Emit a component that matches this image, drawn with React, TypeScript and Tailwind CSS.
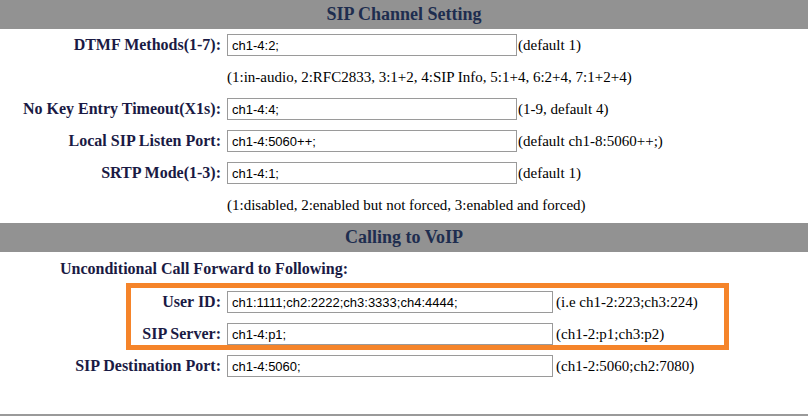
import React from 'react';

const serif = { fontFamily: '"Liberation Serif", "Times New Roman", serif' };

interface RowProps {
  label: string;
  value: string;
  hint: string;
  wide?: boolean;
}

const SectionHeader: React.FC<{ title: string; className?: string }> = ({ title, className }) => (
  <div
    className={`flex items-center justify-center bg-[#929292] text-[18px] font-bold text-[#1e2d4f] ${className ?? ''}`}
    style={serif}
  >
    {title}
  </div>
);

const FieldRow: React.FC<RowProps> = ({ label, value, hint, wide }) => (
  <div className="flex h-[32px] items-center">
    <div className="w-[221px] shrink-0 text-right text-[16px] font-bold text-[#1a1a44]" style={serif}>
      {label}
    </div>
    <input
      readOnly
      value={value}
      className={`ml-[6px] h-[22px] shrink-0 border border-[#9a9a9a] bg-white px-[4px] text-[13px] text-black outline-none ${
        wide ? 'w-[326px]' : 'w-[290px]'
      }`}
      style={{ fontFamily: '"Liberation Sans", Arial, sans-serif' }}
    />
    <span className={`text-[15px] text-black ${wide ? 'ml-[3px]' : 'ml-[1px]'}`} style={serif}>
      {hint}
    </span>
  </div>
);

const HelpRow: React.FC<{ text: string }> = ({ text }) => (
  <div className="flex h-[32px] items-center pl-[227px] text-[15px] text-black" style={serif}>
    {text}
  </div>
);

export default function App() {
  return (
    <div className="relative h-[416px] w-[808px] overflow-hidden bg-white">
      <SectionHeader title="SIP Channel Setting" className="h-[29px]" />
      <FieldRow label="DTMF Methods(1-7):" value="ch1-4:2;" hint="(default 1)" />
      <HelpRow text="(1:in-audio, 2:RFC2833, 3:1+2, 4:SIP Info, 5:1+4, 6:2+4, 7:1+2+4)" />
      <FieldRow label="No Key Entry Timeout(X1s):" value="ch1-4:4;" hint="(1-9, default 4)" />
      <FieldRow label="Local SIP Listen Port:" value="ch1-4:5060++;" hint="(default ch1-8:5060++;)" />
      <FieldRow label="SRTP Mode(1-3):" value="ch1-4:1;" hint="(default 1)" />
      <HelpRow text="(1:disabled, 2:enabled but not forced, 3:enabled and forced)" />

      <SectionHeader title="Calling to VoIP" className="mt-[2px] h-[29px]" />
      <div
        className="flex h-[34px] items-center pl-[60px] text-[16px] font-bold text-[#1a1a44]"
        style={serif}
      >
        Unconditional Call Forward to Following:
      </div>
      <FieldRow label="User ID:" value="ch1:1111;ch2:2222;ch3:3333;ch4:4444;" hint="(i.e ch1-2:223;ch3:224)" wide />
      <FieldRow label="SIP Server:" value="ch1-4:p1;" hint="(ch1-2:p1;ch3:p2)" wide />
      <FieldRow label="SIP Destination Port:" value="ch1-4:5060;" hint="(ch1-2:5060;ch2:7080)" wide />

      <div className="mt-[32px] h-[2px] bg-[#9a9a9a]" />

      {/* annotation box drawn over the forward settings */}
      <div className="pointer-events-none absolute left-[126px] top-[283px] h-[67px] w-[603px] border-[5px] border-[#f5842a]" />
    </div>
  );
}
